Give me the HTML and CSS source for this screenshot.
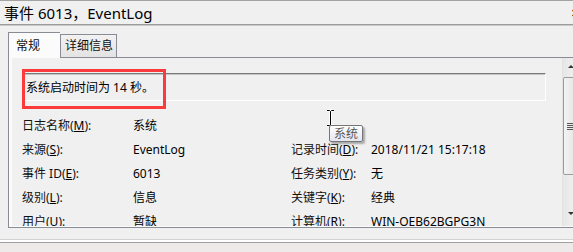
FILE: index.html
```html
<!DOCTYPE html>
<html lang="zh-CN">
<head>
    <meta charset="UTF-8">
    <title>事件 6013，EventLog</title>
    <link rel="stylesheet" href="styles.css">
</head>
<body>
    <div class="window">
        <div class="titlebar">
            <span class="title">事件 6013，EventLog</span>
            <span class="close">✕</span>
        </div>

        <div class="tabs">
            <div class="tab active">常规</div>
            <div class="tab">详细信息</div>
        </div>

        <div class="panel">
            <div class="scroll-view">
                <div class="content">
                    <div class="message">系统启动时间为 14 秒。</div>

                    <div class="fields">
                        <span class="label">日志名称(<u>M</u>):</span>
                        <span class="value">系统</span>
                        <span></span>
                        <span></span>

                        <span class="label">来源(<u>S</u>):</span>
                        <span class="value">EventLog</span>
                        <span class="label">记录时间(<u>D</u>):</span>
                        <span class="value">2018/11/21 15:17:18</span>

                        <span class="label">事件 ID(<u>E</u>):</span>
                        <span class="value">6013</span>
                        <span class="label">任务类别(<u>Y</u>):</span>
                        <span class="value">无</span>

                        <span class="label">级别(<u>L</u>):</span>
                        <span class="value">信息</span>
                        <span class="label">关键字(<u>K</u>):</span>
                        <span class="value">经典</span>

                        <span class="label">用户(<u>U</u>):</span>
                        <span class="value">暂缺</span>
                        <span class="label">计算机(<u>R</u>):</span>
                        <span class="value">WIN-OEB62BGPG3N</span>
                    </div>
                </div>

                <div class="scrollbar">
                    <div class="arrow up"></div>
                    <div class="thumb"><div class="grip"></div></div>
                    <div class="arrow down"></div>
                </div>
            </div>
        </div>

        <div class="separator"></div>
        <div class="footer"></div>

        <!-- annotation + hover state -->
        <div class="highlight"></div>
        <svg class="cursor" width="9" height="18" viewBox="0 0 9 18">
            <path d="M1 1.5h2.5l1 1 1-1H8M4.5 2.5v13M1 16.5h2.5l1-1 1 1H8" fill="none" stroke="#fff" stroke-width="2.5"/>
            <path d="M1 1.5h2.5l1 1 1-1H8M4.5 2.5v13M1 16.5h2.5l1-1 1 1H8" fill="none" stroke="#000" stroke-width="1"/>
        </svg>
        <div class="tooltip">系统</div>
    </div>
</body>
</html>
```

FILE: styles.css
```css
/* Fenêtre propriétés d'événement */
body {
    margin: 0;
    padding: 0;
    background-color: #f0f0f0;
    font-family: 'Noto Sans', 'Noto Sans CJK SC', sans-serif;
    font-size: 12px;
    color: #111;
}

.window {
    position: relative;
    width: 573px;
    height: 252px;
    overflow: hidden;
}

.titlebar {
    display: flex;
    align-items: center;
    box-sizing: border-box;
    height: 25px;
    border-top: 1px solid #a3a3a3;
    border-bottom: 1px solid #9c9c9c;
    box-shadow: 0 1px 0 #c9c9c9;
    padding-left: 4px;
}

.title {
    flex: 1;
    font-size: 15px;
    color: #000;
    white-space: nowrap;
}

.close {
    margin-right: -7px;
    font-size: 11px;
    font-weight: bold;
    color: #222;
}

.tabs {
    display: flex;
    align-items: flex-end;
    height: 25px;
    margin-top: 7px;
    padding-left: 8px;
    position: relative;
    z-index: 1;
}

.tab {
    box-sizing: border-box;
    height: 23px;
    padding: 0 4px;
    border: 1px solid #898c95;
    border-bottom: none;
    background: linear-gradient(#f2f2f2, #e3e3e3);
    line-height: 22px;
    white-space: nowrap;
}

.tab.active {
    width: 52px;
    height: 26px;
    margin-bottom: -1px;
    padding-left: 7px;
    background: #fbfbfb;
    line-height: 25px;
    border-right: none;
}

.tab:not(.active) {
    width: 57px;
}

.panel {
    margin-left: 8px;
    width: 600px;
    border: 1px solid #898c95;
    background-color: #fbfbfb;
    padding: 0 0 1px 3px;
}

.scroll-view {
    display: flex;
    height: 168px;
}

.content {
    width: 550px;
    height: 168px;
    overflow: hidden;
    background-color: #f0f0f0;
    box-sizing: border-box;
    padding: 15px 0 0 10px;
}

.message {
    box-sizing: border-box;
    width: 524px;
    height: 28px;
    border-top: 1px solid #7a7a7a;
    border-left: 1px solid #a0a0a0;
    border-right: 1px solid #fff;
    border-bottom: 1px solid #fff;
    box-shadow: inset 0 1px 0 #c4c4c4;
    padding-left: 3px;
    line-height: 27px;
    color: #000;
}

.fields {
    display: grid;
    grid-template-columns: 111px 158px 80px 1fr;
    grid-auto-rows: 24px;
    align-items: center;
    margin-top: 12px;
    white-space: nowrap;
}

.label u,
.value {
    color: #000;
}

.scrollbar {
    display: flex;
    flex-direction: column;
    align-items: stretch;
    width: 17px;
    box-sizing: border-box;
    border-left: 1px solid #e2e2e2;
    background: linear-gradient(to right, #e6e6e6, #f4f4f4);
}

.arrow {
    height: 17px;
    position: relative;
}

.arrow::after {
    content: "";
    position: absolute;
    left: 5px;
    border-left: 3px solid transparent;
    border-right: 3px solid transparent;
}

.arrow.up::after {
    top: 7px;
    border-bottom: 3px solid #333;
}

.arrow.down {
    margin-top: auto;
    height: 15px;
}

.arrow.down::after {
    top: 1px;
    border-top: 3px solid #333;
}

.thumb {
    height: 96px;
    margin-top: 2px;
    border: 1px solid #9b9b9b;
    border-radius: 2px;
    background: linear-gradient(to right, #f3f3f3, #e2e2e2);
    display: flex;
    align-items: center;
    justify-content: center;
}

.grip {
    width: 7px;
    height: 7px;
    margin-left: -2px;
    background: repeating-linear-gradient(#555 0 1px, transparent 1px 2px);
}

.separator {
    box-sizing: border-box;
    height: 4px;
    margin-top: 11px;
    border-top: 1px solid #d3d3d3;
    border-bottom: 1px solid #a0a0a0;
    background-color: #fff;
}

.footer {
    height: 20px;
    background-color: #edeae9;
}

/* Encadré rouge d'annotation */
.highlight {
    position: absolute;
    left: 22px;
    top: 69px;
    width: 144px;
    height: 40px;
    box-sizing: border-box;
    border: 3px solid #fb3b3b;
}

.cursor {
    position: absolute;
    left: 326px;
    top: 109px;
}

.tooltip {
    position: absolute;
    left: 329px;
    top: 125px;
    box-sizing: border-box;
    height: 17px;
    padding: 0 4px;
    border: 1px solid #767676;
    border-radius: 2px;
    background: linear-gradient(#ffffff, #e4e5f0);
    box-shadow: 2px 2px 2px rgba(0, 0, 0, 0.3);
    color: #575757;
    line-height: 15px;
}
```
